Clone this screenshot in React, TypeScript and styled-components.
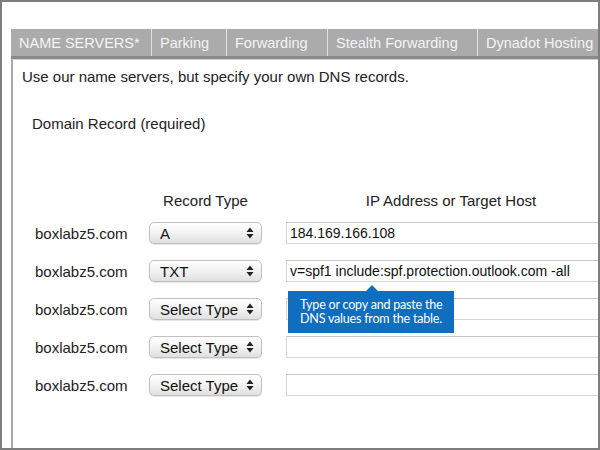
import { FC } from "react";
import styled, { createGlobalStyle } from "styled-components";

const tabs = [
  { label: "NAME SERVERS*", width: 141 },
  { label: "Parking", width: 75 },
  { label: "Forwarding", width: 101 },
  { label: "Stealth Forwarding", width: 150 },
  { label: "Dynadot Hosting", width: 140 },
];

const records = [
  { type: "A", value: "184.169.166.108" },
  { type: "TXT", value: "v=spf1 include:spf.protection.outlook.com -all", tip: true },
  { type: "Select Type", value: "" },
  { type: "Select Type", value: "" },
  { type: "Select Type", value: "" },
];

const App: FC = () => {
  return (
    <>
      <GlobalStyle />
      <Frame>
        <TabBar>
          {tabs.map((t) => (
            <Tab key={t.label} $width={t.width}>
              {t.label}
            </Tab>
          ))}
        </TabBar>
        <Panel>
          <Intro>Use our name servers, but specify your own DNS records.</Intro>
          <SectionTitle>Domain Record (required)</SectionTitle>
          <Table>
            <span />
            <ColHead>Record Type</ColHead>
            <ColHead>IP Address or Target Host</ColHead>
            {records.map((r, i) => (
              <Row key={i}>
                <Domain>boxlabz5.com</Domain>
                <Select>
                  <span>{r.type}</span>
                  <Arrows />
                </Select>
                <InputCell>
                  <TextInput>{r.value}</TextInput>
                  {r.tip && (
                    <Tooltip>
                      Type or copy and paste the
                      <br />
                      DNS values from the table.
                    </Tooltip>
                  )}
                </InputCell>
              </Row>
            ))}
          </Table>
        </Panel>
      </Frame>
    </>
  );
};
export default App;

function Arrows() {
  return (
    <ArrowIcon width="8" height="12" viewBox="0 0 8 12">
      <path d="M4 0.5 L7.5 5 H0.5 Z" fill="#222" />
      <path d="M4 11.5 L7.5 7 H0.5 Z" fill="#222" />
    </ArrowIcon>
  );
}

const GlobalStyle = createGlobalStyle`
  body {
    margin: 0;
    font-family: "Liberation Sans", Arial, sans-serif;
    background: #fff;
  }
`;

const Frame = styled.div`
  width: 600px;
  height: 450px;
  box-sizing: border-box;
  border: 2px solid #7d7d7d;
  padding: 27px 0 0 9px;
  overflow: hidden;
  display: flex;
  flex-direction: column;
`;

const TabBar = styled.div`
  display: flex;
  height: 27px;
  background: #ababab;
  border-bottom: 3px solid #8a8a8a;
  width: 640px;
  flex: none;
`;

const Tab = styled.div<{ $width: number }>`
  flex: none;
  width: ${(p) => p.$width}px;
  box-sizing: border-box;
  display: flex;
  align-items: center;
  padding-left: 8px;
  font-size: 14.5px;
  color: #f4f4f4;
  border-right: 1px solid #e2e2e2;
  white-space: nowrap;
`;

const Panel = styled.div`
  flex: 1;
  border-left: 2px solid #a8a8a8;
  border-top: 1px solid #d0d0d0;
  width: 640px;
  padding: 8px 0 0 9px;
  color: #222;
  font-size: 15px;
`;

const Intro = styled.div`
  line-height: 18px;
`;

const SectionTitle = styled.div`
  line-height: 18px;
  margin: 29px 0 0 10px;
`;

const Table = styled.div`
  display: grid;
  grid-template-columns: 90px 113px 330px;
  column-gap: 24px;
  row-gap: 16px;
  margin: 59px 0 0 13px;
  align-items: center;
`;

const ColHead = styled.div`
  line-height: 18px;
  text-align: center;
  margin-bottom: -4px;
`;

const Row = styled.div`
  display: contents;
`;

const Domain = styled.div`
  color: #222;
  white-space: nowrap;
`;

const Select = styled.div`
  height: 22px;
  box-sizing: border-box;
  border: 1px solid #c0c0c0;
  border-radius: 5px;
  background: linear-gradient(#ffffff, #f2f2f2 50%, #e0e0e0);
  box-shadow: 0 1px 1px rgba(0, 0, 0, 0.1);
  display: flex;
  align-items: center;
  justify-content: space-between;
  padding: 0 7px 0 10px;
  color: #111;
`;

const ArrowIcon = styled.svg`
  display: block;
`;

const InputCell = styled.div`
  position: relative;
`;

const TextInput = styled.div`
  height: 22px;
  box-sizing: border-box;
  border: 1px solid #d6d6d6;
  border-top-color: #c6c6c6;
  padding: 0 3px;
  display: flex;
  align-items: center;
  font-size: 14px;
  color: #111;
  white-space: nowrap;
`;

const Tooltip = styled.div`
  position: absolute;
  top: calc(100% + 9px);
  left: 2px;
  width: 166px;
  height: 42px;
  box-sizing: border-box;
  background: #106ebe;
  color: #fff;
  font-family: Lato, "Noto Sans", sans-serif;
  font-size: 12.5px;
  letter-spacing: -0.2px;
  line-height: 14px;
  padding: 7px 0 0 12px;
  white-space: nowrap;
  z-index: 2;

  &::before {
    content: "";
    position: absolute;
    top: -6px;
    left: 78px;
    border-left: 6px solid transparent;
    border-right: 6px solid transparent;
    border-bottom: 6px solid #106ebe;
  }
`;
